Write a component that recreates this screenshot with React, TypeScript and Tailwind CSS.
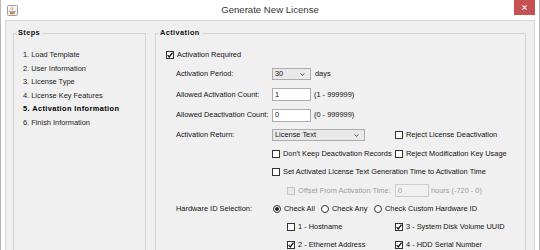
import type { ReactNode } from "react";

type CheckProps = {
  label: string;
  checked?: boolean;
  disabled?: boolean;
};

function Box({ checked = false, disabled = false }: { checked?: boolean; disabled?: boolean }) {
  return (
    <span
      className={`flex h-[8px] w-[8px] shrink-0 items-center justify-center border ${
        disabled ? "border-[#c6c6c6] bg-[#e8e8e8]" : "border-[#333333] bg-white"
      }`}
    >
      {checked && (
        <svg viewBox="0 0 6 6" className="h-[6px] w-[6px]">
          <path d="M0.6 3.1 2.3 4.9 5.5 0.6" fill="none" stroke="#111" strokeWidth="1.3" />
        </svg>
      )}
    </span>
  );
}

function Check({ label, checked, disabled }: CheckProps) {
  return (
    <span className="flex items-center gap-[3px] whitespace-nowrap">
      <Box checked={checked} disabled={disabled} />
      <span className={disabled ? "text-[#9d9d9d]" : ""}>{label}</span>
    </span>
  );
}

function Radio({ label, checked = false }: { label: string; checked?: boolean }) {
  return (
    <span className="flex items-center gap-[3px] whitespace-nowrap">
      <span className="flex h-[8px] w-[8px] shrink-0 items-center justify-center rounded-full border border-[#333333] bg-white">
        {checked && <span className="h-[4px] w-[4px] rounded-full bg-[#222]" />}
      </span>
      {label}
    </span>
  );
}

function Chevron() {
  return (
    <svg viewBox="0 0 6 4" className="h-[3px] w-[5px]">
      <path d="M0.6 0.6 3 3.2 5.4 0.6" fill="none" stroke="#333" strokeWidth="1.1" />
    </svg>
  );
}

function Label({ children }: { children: ReactNode }) {
  return <span className="w-[96px] shrink-0 whitespace-nowrap">{children}</span>;
}

function AppIcon() {
  return (
    <svg width="11" height="11" viewBox="0 0 11 11">
      <rect x="0.5" y="0.5" width="10" height="10" rx="1" fill="#f3f3f3" stroke="#9d9d9d" />
      <path d="M2.6 7.3h5.4l-0.7 2h-4z" fill="#e27a22" />
      <path d="M5.6 1.8c-1.1 1 .9 1.7-.2 3.4M4.2 3c-.7.8.5 1.1-.1 2.1" fill="none" stroke="#e98b2e" strokeWidth="0.8" />
      <path d="M2.2 6.5c1.6.5 4.6.5 6.4-.2" fill="none" stroke="#4a78b8" strokeWidth="0.8" />
    </svg>
  );
}

const steps = [
  "1. Load Template",
  "2. User Information",
  "3. License Type",
  "4. License Key Features",
  "5. Activation Information",
  "6. Finish Information",
];

export default function App() {
  return (
    <div className="flex h-[250px] w-[540px] flex-col overflow-hidden border-x border-[#b8b8b8] bg-white px-[4px] font-['Liberation_Sans',Arial,sans-serif] text-[7.4px] leading-[10px] text-[#111]">
      <div className="grid h-[20px] shrink-0 grid-cols-[1fr_auto_1fr] items-start">
        <div className="pl-[2px] pt-[5px]">
          <AppIcon />
        </div>
        <div className="pt-[4px] text-[9.6px] leading-[12px] text-[#333]">Generate New License</div>
        <div className="flex h-[15px] w-[21px] items-center justify-center justify-self-end bg-[#c75050]">
          <svg viewBox="0 0 6 6" className="h-[5px] w-[5px]">
            <path d="M0.5 0.5 5.5 5.5M5.5 0.5 0.5 5.5" stroke="#fff" strokeWidth="1.3" />
          </svg>
        </div>
      </div>

      <div className="flex h-[300px] shrink-0 gap-[9px] border border-[#d6d6d6] bg-[#f0f0f0] pl-[7px] pr-[8px] pt-[7px]">
        <fieldset className="h-[280px] w-[133px] shrink-0 border border-[#d5d5d5]">
          <legend className="ml-[2px] px-[2px] font-bold leading-[10px] tracking-[0.4px]">Steps</legend>
          <ul className="pl-[9px] pt-[10px] text-[#222]">
            {steps.map((step, i) => (
              <li
                key={step}
                className={`whitespace-nowrap leading-[13.5px] ${i === 4 ? "font-bold tracking-[0.4px] text-black" : ""}`}
              >
                {step}
              </li>
            ))}
          </ul>
        </fieldset>

        <fieldset className="h-[280px] min-w-0 flex-1 border border-[#d5d5d5]">
          <legend className="ml-[2px] px-[2px] font-bold leading-[10px] tracking-[0.4px]">Activation</legend>
          <div className="flex flex-col pt-[8px]">
            <div className="flex h-[18px] items-center pl-[10px]">
              <Check label="Activation Required" checked />
            </div>

            <div className="flex h-[20px] items-center pl-[20px]">
              <Label>Activation Period:</Label>
              <span className="flex h-[12px] w-[39px] items-center justify-between border border-[#acacac] bg-[#e9e9e9] pl-[2px] pr-[5px]">
                30
                <Chevron />
              </span>
              <span className="ml-[4px]">days</span>
            </div>

            <div className="flex h-[21px] items-center pl-[20px]">
              <Label>Allowed Activation Count:</Label>
              <span className="flex h-[13px] w-[39px] items-center border border-[#abadb3] bg-white pl-[2px]">1</span>
              <span className="ml-[3px]">(1 - 999999)</span>
            </div>

            <div className="flex h-[20px] items-center pl-[20px]">
              <Label>Allowed Deactivation Count:</Label>
              <span className="flex h-[13px] w-[39px] items-center border border-[#abadb3] bg-white pl-[2px]">0</span>
              <span className="ml-[3px]">(0 - 999999)</span>
            </div>

            <div className="flex h-[20px] items-center pl-[20px]">
              <div className="flex w-[219px] shrink-0 items-center">
                <Label>Activation Return:</Label>
                <span className="flex h-[12px] w-[93px] items-center justify-between border border-[#acacac] bg-[#e9e9e9] pl-[2px] pr-[5px]">
                  License Text
                  <Chevron />
                </span>
              </div>
              <Check label="Reject License Deactivation" />
            </div>

            <div className="flex h-[18px] items-center pl-[116px]">
              <div className="w-[123px] shrink-0">
                <Check label="Don't Keep Deactivation Records" />
              </div>
              <Check label="Reject Modification Key Usage" />
            </div>

            <div className="flex h-[18px] items-center pl-[116px]">
              <Check label="Set Activated License Text Generation Time to Activation Time" />
            </div>

            <div className="flex h-[19px] items-center pl-[131px]">
              <div className="w-[108px] shrink-0">
                <Check label="Offset From Activation Time:" disabled />
              </div>
              <span className="flex h-[13px] w-[34px] items-center border border-[#cdcdcd] bg-[#f0f0f0] pl-[2px] text-[#9d9d9d]">
                0
              </span>
              <span className="ml-[2px] text-[#9d9d9d]">hours (-720 - 0)</span>
            </div>

            <div className="flex h-[18px] items-center pl-[20px]">
              <Label>Hardware ID Selection:</Label>
              <div className="ml-[1px] flex items-center">
                <div className="w-[48px]">
                  <Radio label="Check All" checked />
                </div>
                <div className="w-[53px]">
                  <Radio label="Check Any" />
                </div>
                <Radio label="Check Custom Hardware ID" />
              </div>
            </div>

            <div className="flex h-[18px] items-center pl-[131px]">
              <div className="w-[108px] shrink-0">
                <Check label="1 - Hostname" />
              </div>
              <Check label="3 - System Disk Volume UUID" checked />
            </div>

            <div className="flex h-[18px] items-center pl-[131px]">
              <div className="w-[108px] shrink-0">
                <Check label="2 - Ethernet Address" checked />
              </div>
              <Check label="4 - HDD Serial Number" checked />
            </div>
          </div>
        </fieldset>
      </div>
    </div>
  );
}
